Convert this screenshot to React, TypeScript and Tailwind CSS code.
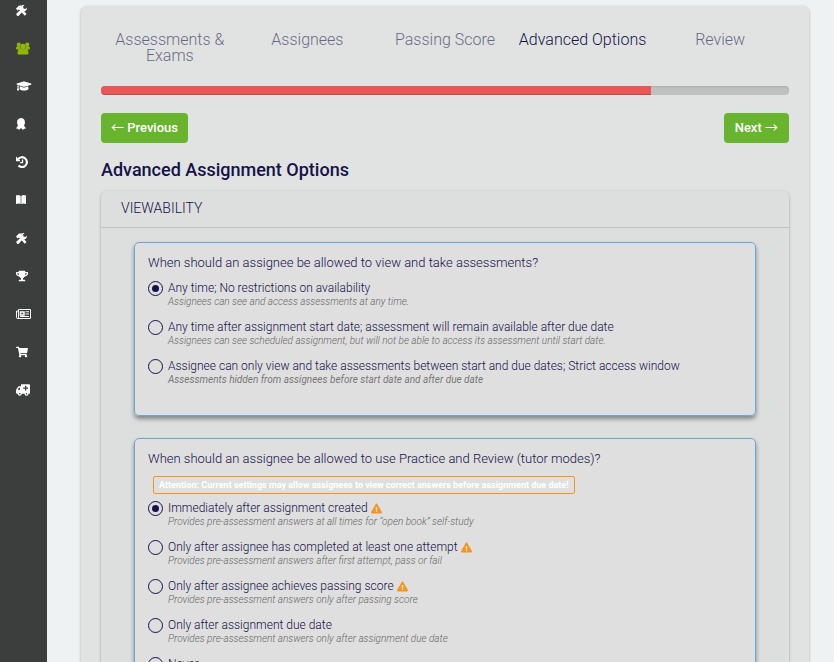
import type { ReactNode } from "react";
import { FaExclamationTriangle, FaGraduationCap, FaShoppingCart, FaTrophy } from "react-icons/fa";

const ToolsIcon = () => (
  <svg viewBox="0 0 22 22" className="size-[11px]" fill="currentColor" aria-hidden="true">
    <path d="M0 7l6-6h6L10 5l2 2 9 11-3.500 3.500L8 11 6 9l-3 2z" />
    <path d="M22 5l-3 3-4-1-1-4 3-3q-4-1-6 2t0 6L1 17q-1 2 1 4t4 0L14 12q4 1 6-1t2-6z" />
  </svg>
);

const UsersIcon = () => (
  <svg viewBox="0 0 28 24" className="h-[13px] w-[14px]" fill="currentColor" aria-hidden="true">
    <circle cx="5.5" cy="4" r="4" />
    <circle cx="22.5" cy="4" r="4" />
    <circle cx="14" cy="8" r="5.400" />
    <path d="M2 7.500h6q0 4 2 6.500H2q-2 0-2-2.500t2-4zM26 7.500h-6q0 4-2 6.500h8q2 0 2-2.500t-2-4z" />
    <path d="M9 12q5 3 10 0 6 1 6 9 0 3-2 3H5q-2 0-2-3 0-8 6-9z" />
  </svg>
);

const RibbonIcon = () => (
  <svg viewBox="0 0 20 24" className="h-3 w-[10px]" fill="currentColor" aria-hidden="true">
    <path d="M10 0l4 1 3 3 1 5-1 4-1 2 4 6-4 .5-2 2.500-4-4-4 4-2-2.500-4-.5 4-6-1-2-1-4 1-5 3-3z" />
  </svg>
);

const HistoryIcon = () => (
  <svg viewBox="0 0 22 22" className="size-3" fill="none" stroke="currentColor" aria-hidden="true">
    <path d="M4 5.500A9 9 0 1 1 4.500 17.500" strokeWidth="4" />
    <path d="M0 1v8.500h8.500z" fill="currentColor" stroke="none" />
    <path d="M12 6.500V12H7.500" strokeWidth="2.400" />
  </svg>
);

const BookIcon = () => (
  <svg viewBox="0 0 20 20" className="size-[10px]" fill="currentColor" aria-hidden="true">
    <path d="M0 1q5-2 9.400 1v16Q5 15.500 0 18zM20 1q-5-2-9.400 1v16Q15 15.500 20 18z" />
  </svg>
);

const NewsIcon = () => (
  <svg viewBox="0 0 30 20" className="h-[10px] w-[15px]" fill="none" stroke="currentColor" aria-hidden="true">
    <path d="M5 1h24v18H3q-2 0-2-2V4h4v13q0 2-2 2M5 1v16" strokeWidth="2" />
    <path d="M9 6h7v6H9z" strokeWidth="3" />
    <path d="M19 5.500h7M19 10h7M8 15h18" strokeWidth="2.400" />
  </svg>
);

const AmbulanceIcon = () => (
  <svg viewBox="0 0 28 23" className="h-[12px] w-[14px]" fill="currentColor" aria-hidden="true">
    <path
      fillRule="evenodd"
      d="M10 0h16q2 0 2 2v15q0 2-1 2H2q-2 0-2-2v-6l5-7h5zM3 11h5V7H6zM18 3v3.500h-3.500v2.500H18V12.500h2.500V9H24V6.500h-3.500V3z"
    />
    <circle cx="7.5" cy="19" r="4" />
    <circle cx="21" cy="19" r="4" />
    <g className="text-[#3c3e3d]">
      <circle cx="7.5" cy="19" r="1.500" />
      <circle cx="21" cy="19" r="1.500" />
    </g>
  </svg>
);

const navItems: { label: string; icon: ReactNode; active?: boolean }[] = [
  { label: "Tools", icon: <ToolsIcon /> },
  { label: "Users", icon: <UsersIcon />, active: true },
  { label: "Courses", icon: <FaGraduationCap className="h-3 w-4" /> },
  { label: "Certificates", icon: <RibbonIcon /> },
  { label: "History", icon: <HistoryIcon /> },
  { label: "Library", icon: <BookIcon /> },
  { label: "Settings", icon: <ToolsIcon /> },
  { label: "Awards", icon: <FaTrophy className="size-3" /> },
  { label: "News", icon: <NewsIcon /> },
  { label: "Store", icon: <FaShoppingCart className="size-3" /> },
  { label: "Support", icon: <AmbulanceIcon /> },
];

const steps = ["Assessments & Exams", "Assignees", "Passing Score", "Advanced Options", "Review"];
const currentStep = 3;

type Option = { label: string; hint?: string; strong?: boolean; warn?: boolean };

const viewOptions: Option[] = [
  { label: "Any time; No restrictions on availability", hint: "Assignees can see and access assessments at any time." },
  {
    label: "Any time after assignment start date; assessment will remain available after due date",
    hint: "Assignees can see scheduled assignment, but will not be able to access its assessment until start date.",
  },
  {
    label: "Assignee can only view and take assessments between start and due dates; Strict access window",
    hint: "Assessments hidden from assignees before start date and after due date",
    strong: true,
  },
];

const practiceOptions: Option[] = [
  {
    label: "Immediately after assignment created",
    hint: "Provides pre-assessment answers at all times for “open book” self-study",
    warn: true,
  },
  {
    label: "Only after assignee has completed at least one attempt",
    hint: "Provides pre-assessment answers after first attempt, pass or fail",
    warn: true,
  },
  {
    label: "Only after assignee achieves passing score",
    hint: "Provides pre-assessment answers only after passing score",
    warn: true,
  },
  { label: "Only after assignment due date", hint: "Provides pre-assessment answers only after assignment due date" },
  { label: "Never" },
];

function RadioOption({ name, option, selected }: { name: string; option: Option; selected: boolean }) {
  return (
    <label className="flex h-[39px] items-start gap-[5px]">
      <input
        type="radio"
        name={name}
        defaultChecked={selected}
        className="grid size-[15px] shrink-0 appearance-none place-items-center rounded-full border border-[#14124a] before:size-[7px] before:rounded-full checked:before:bg-[#14124a]"
      />
      <span>
        <span className="flex items-center gap-[3px] text-[12px] leading-[15px] font-light">
          {option.label}
          {option.warn && <FaExclamationTriangle className="size-[11px] text-[#f7941d]" />}
        </span>
        {option.hint && (
          <span
            className={
              option.strong
                ? "block text-[10px] leading-3 font-normal text-[#777777] italic"
                : "block text-[10px] leading-3 font-light text-[#666666] italic"
            }
          >
            {option.hint}
          </span>
        )}
      </span>
    </label>
  );
}

function OptionGroup({
  name,
  question,
  notice,
  options,
}: {
  name: string;
  question: string;
  notice?: string;
  options: Option[];
}) {
  return (
    <fieldset
      aria-label={question}
      className="rounded-[5px] border border-[#6aa5db] bg-[#dfdfdf] px-[13px] pt-3 pb-[17px] shadow-[0_3px_4px_rgba(0,0,0,0.4)]"
    >
      <p className="mb-[9px] text-[13px] leading-4 font-light">{question}</p>
      {notice && (
        <p className="mb-[6px] ml-[5px] w-fit rounded-[2px] border border-[#f7941d] px-[5px] text-[9px] leading-4 font-bold text-white">
          {notice}
        </p>
      )}
      <div className="pt-px">
        {options.map((option, i) => (
          <RadioOption key={option.label} name={name} option={option} selected={i === 0} />
        ))}
      </div>
    </fieldset>
  );
}

const arrow = "font-['Noto_Sans_CJK_SC',sans-serif] leading-none font-normal";

export default function App() {
  return (
    <div className="flex h-screen overflow-hidden bg-[#eef2f3] font-['Roboto',sans-serif] text-[#14124a]">
      <nav aria-label="Main" className="w-[47px] shrink-0 bg-[#3c3e3d]">
        <ul className="flex h-[400px] flex-col justify-between pl-4">
          {navItems.map((item) => (
            <li key={item.label}>
              <a
                href="#"
                aria-label={item.label}
                className={item.active ? "flex h-5 items-center text-[#8fb800]" : "flex h-5 items-center text-white"}
              >
                {item.icon}
              </a>
            </li>
          ))}
        </ul>
      </nav>

      <main className="min-w-0 flex-1 overflow-y-auto pt-[6px] pr-[25px] pl-[34px] [scrollbar-width:none]">
        <div className="rounded-md bg-[#e1e3e2] px-5 pt-[26px] pb-5 shadow-[0_1px_3px_rgba(0,0,0,0.3)]">
          <ol className="grid h-[54px] grid-cols-5 text-center text-[16px] leading-4 font-light">
            {steps.map((step, i) => (
              <li key={step} className={i === currentStep ? "px-1" : "px-1 opacity-60"}>
                {step}
              </li>
            ))}
          </ol>

          <div className="h-[9px] overflow-hidden rounded bg-[#bfc1c0] shadow-[inset_0_1px_2px_rgba(0,0,0,0.1)]">
            <div className="h-full w-4/5 bg-[#e85656] shadow-[inset_0_-1px_0_rgba(0,0,0,0.15)]" />
          </div>

          <div className="mt-[18px] flex justify-between text-[13px] leading-[30px] font-medium text-white">
            <button type="button" className="h-[30px] rounded bg-[#68b42e] px-[10px]">
              <span className={arrow}>←</span> Previous
            </button>
            <button type="button" className="h-[30px] rounded bg-[#68b42e] px-[11px]">
              Next <span className={arrow}>→</span>
            </button>
          </div>

          <h1 className="mt-[15px] text-[18px] leading-6 font-medium">Advanced Assignment Options</h1>

          <section className="mt-[9px] rounded-md bg-[#dddfde] shadow-[0_1px_3px_rgba(0,0,0,0.3)]">
            <h2 className="border-b border-[#bfc1c0] px-5 pb-0.5 text-[14px] leading-[34px] font-light">VIEWABILITY</h2>
            <div className="flex flex-col gap-[22px] px-[33px] pt-[14px] pb-5">
              <OptionGroup
                name="view"
                question="When should an assignee be allowed to view and take assessments?"
                options={viewOptions}
              />
              <OptionGroup
                name="practice"
                question="When should an assignee be allowed to use Practice and Review (tutor modes)?"
                notice="Attention: Current settings may allow assignees to view correct answers before assignment due date!"
                options={practiceOptions}
              />
            </div>
          </section>
        </div>
      </main>
    </div>
  );
}
